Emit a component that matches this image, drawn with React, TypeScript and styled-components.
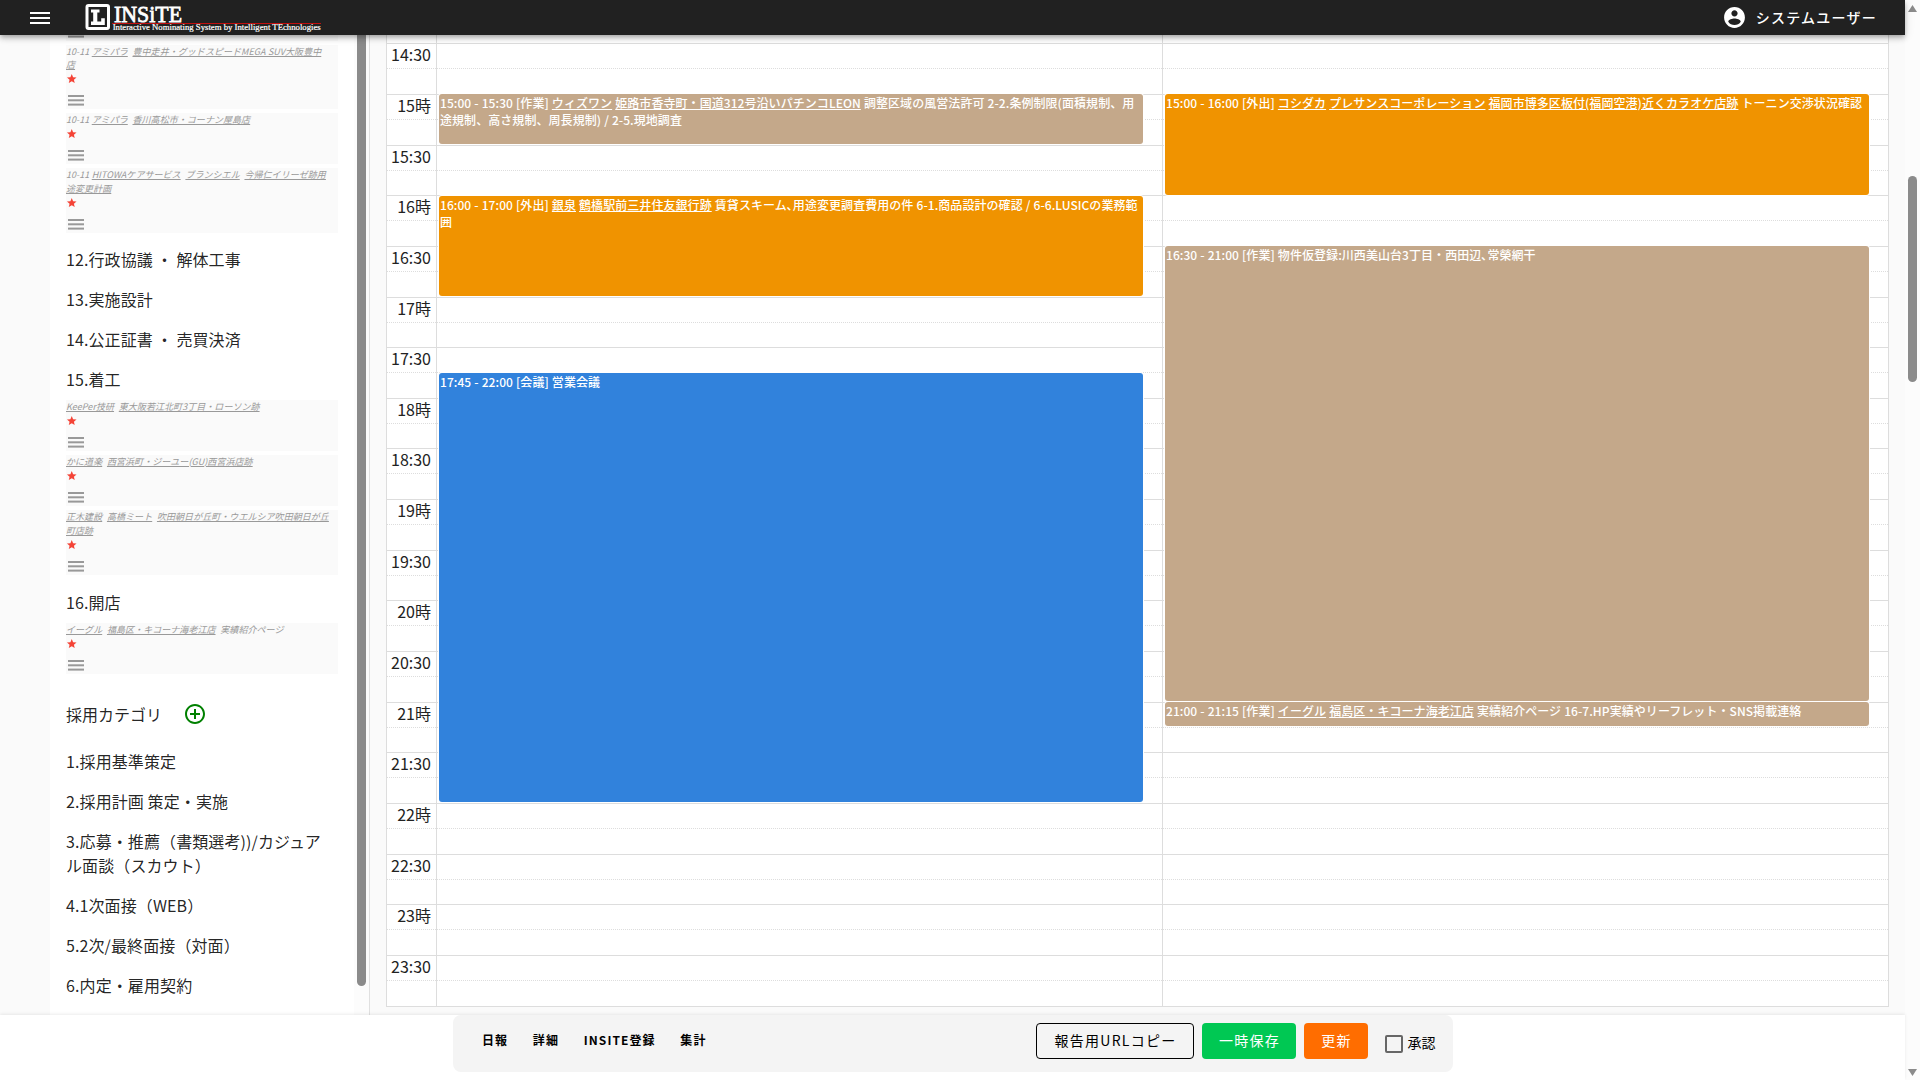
import type { ReactNode } from "react";
import styled, { createGlobalStyle } from "styled-components";

const GlobalStyle = createGlobalStyle`
  * {
    box-sizing: border-box;
  }
  body {
    margin: 0;
    background-color: #fafafa;
    color: rgba(0, 0, 0, 0.87);
    font-family: "Noto Sans CJK JP", "Noto Sans", sans-serif;
    font-size: 16px;
    line-height: 1.5;
    overflow: hidden;
  }
`;

const Page = styled.div`
  display: flex;
  width: 1920px;
  height: 1080px;
`;

const Main = styled.div`
  display: flex;
  flex-direction: column;
  width: 1905px;
  height: 100%;
`;

/* header */

const AppBar = styled.header`
  display: flex;
  align-items: center;
  flex: none;
  height: 35px;
  padding: 0 28px 0 27px;
  background-color: #212121;
  color: #fff;
  position: relative;
  z-index: 5;
  box-shadow: 0 2px 4px -1px rgba(0, 0, 0, 0.2),
    0 4px 5px 0 rgba(0, 0, 0, 0.14), 0 1px 10px 0 rgba(0, 0, 0, 0.12);
`;

const LogoLink = styled.div`
  display: flex;
  margin-left: 32px;
`;

const UserButton = styled.div`
  display: flex;
  align-items: center;
  gap: 9px;
  margin-left: auto;
  font-size: 14px;
  font-weight: 500;
  letter-spacing: 1.25px;
`;

/* body */

const Body = styled.div`
  display: flex;
  flex: none;
  height: 980px;
  overflow: hidden;
`;

const Sidebar = styled.aside`
  display: flex;
  width: 370px;
  padding-left: 50px;
  border-right: 1px solid #e0e0e0;
`;

const CategoryPane = styled.div`
  width: 304px;
  padding: 0 16px;
  background-color: #fff;
  overflow: hidden;
`;

const SideTrack = styled.div`
  width: 15px;
  padding: 0 3px;
  background-color: #fcfcfc;
`;

const SideThumb = styled.div`
  height: 951px;
  border-radius: 0 0 5px 5px;
  background-color: #8b8b8b;
`;

const TaskList = styled.div<{ $top?: number; $bottom: number }>`
  display: flex;
  flex-direction: column;
  gap: 4px;
  padding-top: ${(props) => props.$top ?? 1}px;
  margin-bottom: ${(props) => props.$bottom}px;
`;

const TaskCard = styled.div<{ $height?: number }>`
  display: flex;
  flex-direction: column;
  flex: none;
  width: 272px;
  height: ${(props) => (props.$height ? props.$height + "px" : "auto")};
  background-color: #fafafa;
  color: #999;
  font-size: 9px;
  line-height: 13.5px;
  justify-content: flex-end;
`;

const TaskText = styled.div`
  width: 263.8px;
  font-style: italic;
  white-space: pre-wrap;
  word-break: break-all;
  letter-spacing: 0.05px;
  word-spacing: 0.3px;
`;

const StarRow = styled.div`
  height: 13.5px;
  padding-top: 1.5px;
  svg {
    display: block;
  }
`;

const HandleRow = styled.div`
  flex: none;
  height: 24px;
  padding: 10px 0 0 2px;
  svg {
    display: block;
  }
`;

const CategoryTitle = styled.div`
  padding: 8px 8px 8px 0;
  letter-spacing: 0.1px;
`;

const GroupTitle = styled.div`
  display: flex;
  align-items: center;
  gap: 21px;
  height: 40px;
  margin-bottom: 7.5px;
`;

/* calendar */

const CalendarPane = styled.main`
  flex: 1;
  padding: 0 16px;
`;

const Calendar = styled.div`
  position: relative;
  height: 972px;
  border: 1px solid #ddd;
  border-top: 0;
  background-color: #fff;
  overflow: hidden;
`;

const SlotGrid = styled.div`
  padding-top: 8.3px;
`;

const Slot = styled.div<{ $minor?: boolean }>`
  display: flex;
  height: ${(props) => (props.$minor ? "25.65px" : "25px")};
  border-top: 1px ${(props) => (props.$minor ? "dotted" : "solid")} #ddd;
`;

const SlotLabel = styled.div`
  width: 49px;
  padding-right: 5px;
  text-align: right;
  line-height: 21px;
  color: #222;
`;

const DayLayer = styled.div`
  display: grid;
  grid-template-columns: 1fr 1fr;
  position: absolute;
  top: 0;
  left: 49px;
  right: 0;
  bottom: 0;
`;

const DayColumn = styled.div`
  position: relative;
  border-left: 1px solid #ddd;
`;

const EventBox = styled.div<{ $color: string }>`
  position: absolute;
  left: 2px;
  right: calc(2.5% + 0.4px);
  padding: 0 1px;
  border-radius: 3px;
  background-color: ${(props) => props.$color};
  box-shadow: 0 0 0 1px #fff;
  color: #fff;
  font-size: 12px;
  font-weight: 500;
  line-height: 17px;
  letter-spacing: 0.06px;
  word-spacing: 0.3px;
  overflow: hidden;
`;

/* footer */

const Footer = styled.footer`
  display: flex;
  justify-content: center;
  align-items: flex-start;
  flex: none;
  height: 65px;
  background-color: #fff;
  box-shadow: 0 -1px 3px rgba(0, 0, 0, 0.08);
  position: relative;
  z-index: 4;
`;

const ActionPanel = styled.div`
  display: flex;
  align-items: center;
  width: 1000px;
  height: 57px;
  padding: 0 17px;
  border-radius: 8px;
  background-color: #f4f4f4;
  color: #000;
`;

const TabItem = styled.div`
  padding: 0 12.4px;
  margin-top: -7px;
  font-size: 12px;
  font-weight: 700;
  letter-spacing: 1.07px;
`;

const Actions = styled.div`
  display: flex;
  gap: 8px;
  margin: -5px 0 0 auto;
`;

const ActionButton = styled.div<{ $bg?: string; $width: number }>`
  display: flex;
  justify-content: center;
  align-items: center;
  width: ${(props) => props.$width}px;
  height: 36px;
  padding: 0 0 2px 2px;
  border: ${(props) => (props.$bg ? "0" : "1px solid #000")};
  border-radius: 4px;
  background-color: ${(props) => props.$bg ?? "transparent"};
  color: ${(props) => (props.$bg ? "#fff" : "#000")};
  font-size: 14px;
  letter-spacing: 1.25px;
`;

const Approve = styled.label`
  display: flex;
  align-items: center;
  gap: 5px;
  margin: -2px 0 0 17px;
  font-size: 14px;
`;

const CheckSquare = styled.span`
  width: 18px;
  height: 18px;
  margin-top: 3px;
  border: 2px solid #666;
  border-radius: 2px;
`;

/* window scrollbar */

const WindowTrack = styled.div`
  display: flex;
  flex-direction: column;
  align-items: center;
  width: 15px;
  padding: 5px 0 4px;
  background-color: #fcfcfc;
`;

const WindowThumb = styled.div`
  width: 9px;
  height: 206px;
  margin: 164px 0 auto;
  border-radius: 5px;
  background-color: #8b8b8b;
`;

type Task = { text: ReactNode; height?: number };

const Handle = () => (
  <svg width="16" height="11" fill="#999">
    <rect y="0" width="16" height="2" />
    <rect y="4.3" width="16" height="2" />
    <rect y="8.6" width="16" height="2" />
  </svg>
);

const Star = () => (
  <svg width="11.5" height="11.5" viewBox="0 0 24 24" fill="#f44336">
    <path d="M12 17.27L18.18 21l-1.64-7.03L22 9.24l-7.19-.61L12 2 9.19 8.63 2 9.24l5.46 4.73L5.82 21z" />
  </svg>
);

type TasksProps = { items: Task[]; top?: number; bottom: number };

const Tasks = ({ items, top, bottom }: TasksProps) => (
  <TaskList $top={top} $bottom={bottom}>
    {items.map((item, i) => (
      <TaskCard key={i} $height={item.height}>
        {item.text && <TaskText>{item.text}</TaskText>}
        {item.text && (
          <StarRow>
            <Star />
          </StarRow>
        )}
        <HandleRow>
          <Handle />
        </HandleRow>
      </TaskCard>
    ))}
  </TaskList>
);

const contractTasks: Task[] = [
  // scrolled almost out of view
  { text: null, height: 5.7 },
  {
    text: (
      <>
        10-11 <u>アミパラ</u>{"  "}
        <u>豊中走井・グッドスピードMEGA SUV大阪豊中店</u>
      </>
    ),
  },
  {
    text: (
      <>
        10-11 <u>アミパラ</u>{"  "}
        <u>香川高松市・コーナン屋島店</u>
      </>
    ),
  },
  {
    text: (
      <>
        10-11 <u>HITOWAケアサービス</u>{"  "}
        <u>ブランシエル</u>{"  "}
        <u>今帰仁イリーゼ跡用途変更計画</u>
      </>
    ),
  },
];

const startTasks: Task[] = [
  {
    text: (
      <>
        <u>KeePer技研</u>{"  "}
        <u>東大阪若江北町3丁目・ローソン跡</u>
      </>
    ),
  },
  {
    text: (
      <>
        <u>かに道楽</u>{"  "}
        <u>西宮浜町・ジーユー(GU)西宮浜店跡</u>
      </>
    ),
  },
  {
    text: (
      <>
        <u>正木建設</u>{"  "}
        <u>高橋ミート</u>{"  "}
        <u>吹田朝日が丘町・ウエルシア吹田朝日が丘町店跡</u>
      </>
    ),
  },
];

const openTasks: Task[] = [
  {
    text: (
      <>
        <u>イーグル</u>{"  "}
        <u>福島区・キコーナ海老江店</u>{"  "}実績紹介ページ
      </>
    ),
  },
];

const recruitCategories = [
  "1.採用基準策定",
  "2.採用計画 策定・実施",
  "3.応募・推薦（書類選考))/カジュアル面談（スカウト）",
  "4.1次面接（WEB）",
  "5.2次/最終面接（対面）",
  "6.内定・雇用契約",
];

const slotLabels = [
  "14:30", "15時", "15:30", "16時", "16:30", "17時", "17:30",
  "18時", "18:30", "19時", "19:30", "20時", "20:30", "21時",
  "21:30", "22時", "22:30", "23時", "23:30",
];

type CalendarEvent = {
  start: number;
  end: number;
  color: string;
  text: ReactNode;
};

const TAN = "#c4a88a";
const ORANGE = "#f09300";
const BLUE = "#3182dc";

const days: CalendarEvent[][] = [
  [
    {
      start: 15,
      end: 15.5,
      color: TAN,
      text: (
        <>
          15:00 - 15:30 [作業] <u>ウィズワン</u>{" "}
          <u>姫路市香寺町・国道312号沿いパチンコLEON</u>{" "}
          調整区域の風営法許可 2-2.条例制限(面積規制、用途規制、高さ規制、周長規制) / 2-5.現地調査
        </>
      ),
    },
    {
      start: 16,
      end: 17,
      color: ORANGE,
      text: (
        <>
          16:00 - 17:00 [外出] <u>銀泉</u> <u>鶴橋駅前三井住友銀行跡</u>{" "}
          賃貸スキーム､用途変更調査費用の件 6-1.商品設計の確認 / 6-6.LUSICの業務範囲
        </>
      ),
    },
    {
      start: 17.75,
      end: 22,
      color: BLUE,
      text: <>17:45 - 22:00 [会議] 営業会議</>,
    },
  ],
  [
    {
      start: 15,
      end: 16,
      color: ORANGE,
      text: (
        <>
          15:00 - 16:00 [外出] <u>コシダカ</u>{" "}
          <u>プレサンスコーポレーション</u>{" "}
          <u>福岡市博多区板付(福岡空港)近くカラオケ店跡</u> トーニン交渉状況確認
        </>
      ),
    },
    {
      start: 16.5,
      end: 21,
      color: TAN,
      text: <>16:30 - 21:00 [作業] 物件仮登録:川西美山台3丁目・西田辺､常榮網干</>,
    },
    {
      start: 21,
      end: 21.25,
      color: TAN,
      text: (
        <>
          21:00 - 21:15 [作業] <u>イーグル</u>{" "}
          <u>福島区・キコーナ海老江店</u> 実績紹介ページ 16-7.HP実績やリーフレット・SNS掲載連絡
        </>
      ),
    },
  ],
];

const HOUR = 101.3;
const toTop = (hour: number) => 8.7 + (hour - 14.5) * HOUR;

const Logo = () => (
  <svg width="240" height="35" viewBox="0 0 240 35">
    <rect x="2" y="5.5" width="21.5" height="23" rx="1.5" fill="none" stroke="#fff" strokeWidth="3" />
    <path d="M6 9.5h8.5v3h-2.2v9h3.9v-3.2h3.6V25H6v-3.5h2.2v-9H6z" fill="#fff" />
    <rect x="27" y="23" width="209" height="1" fill="#c00f0f" />
    <text x="29" y="22" fill="#fff" stroke="#fff" strokeWidth="0.8" fontFamily="Liberation Serif, serif" fontSize="24" textLength="68" lengthAdjust="spacingAndGlyphs">
      INSiTE
    </text>
    <text x="27.7" y="30.4" fill="#fff" stroke="#fff" strokeWidth="0.2" fontFamily="Liberation Serif, serif" fontSize="8.3" textLength="208" lengthAdjust="spacingAndGlyphs">
      Interactive Nominating System by Intelligent TEchnologies
    </text>
  </svg>
);

const Header = () => (
  <AppBar>
    <svg width="26" height="26" viewBox="0 0 26 26" fill="#fff">
      <path d="M3 7h20v2H3zM3 12h20v2H3zM3 17h20v2H3z" />
    </svg>
    <LogoLink>
      <Logo />
    </LogoLink>
    <UserButton>
      <svg width="25" height="25" viewBox="0 0 24 24" fill="#fff">
        <path d="M12 2C6.48 2 2 6.48 2 12s4.48 10 10 10 10-4.48 10-10S17.52 2 12 2zm0 3c1.66 0 3 1.34 3 3s-1.34 3-3 3-3-1.34-3-3 1.34-3 3-3zm0 14.2c-2.5 0-4.71-1.28-6-3.22.03-1.99 4-3.08 6-3.08 1.99 0 5.97 1.09 6 3.08-1.29 1.94-3.5 3.22-6 3.22z" />
      </svg>
      システムユーザー
    </UserButton>
  </AppBar>
);

const App = () => {
  return (
    <>
      <GlobalStyle />
      <Page>
        <Main>
          <Header />
          <Body>
            <Sidebar>
              <CategoryPane>
                <Tasks items={contractTasks} top={0} bottom={6.5} />
                <CategoryTitle>12.行政協議 ・ 解体工事</CategoryTitle>
                <CategoryTitle>13.実施設計</CategoryTitle>
                <CategoryTitle>14.公正証書 ・ 売買決済</CategoryTitle>
                <CategoryTitle>15.着工</CategoryTitle>
                <Tasks items={startTasks} bottom={7} />
                <CategoryTitle>16.開店</CategoryTitle>
                <Tasks items={openTasks} bottom={20} />
                <GroupTitle>
                  採用カテゴリ
                  <svg width="24" height="24" viewBox="0 0 24 24" fill="green">
                    <path d="M13 7h-2v4H7v2h4v4h2v-4h4v-2h-4V7zm-1-5C6.48 2 2 6.48 2 12s4.48 10 10 10 10-4.48 10-10S17.52 2 12 2zm0 18c-4.41 0-8-3.59-8-8s3.59-8 8-8 8 3.59 8 8-3.59 8-8 8z" />
                  </svg>
                </GroupTitle>
                {recruitCategories.map((name) => (
                  <CategoryTitle key={name}>{name}</CategoryTitle>
                ))}
              </CategoryPane>
              <SideTrack>
                <SideThumb />
              </SideTrack>
            </Sidebar>
            <CalendarPane>
              <Calendar>
                <SlotGrid>
                  {slotLabels.map((label) => (
                    <div key={label}>
                      <Slot>
                        <SlotLabel>{label}</SlotLabel>
                      </Slot>
                      <Slot $minor />
                    </div>
                  ))}
                </SlotGrid>
                <DayLayer>
                  {days.map((events, i) => (
                    <DayColumn key={i}>
                      {events.map((event) => (
                        <EventBox
                          key={event.start}
                          $color={event.color}
                          style={{
                            top: toTop(event.start),
                            height: toTop(event.end) - toTop(event.start) - 1,
                          }}
                        >
                          {event.text}
                        </EventBox>
                      ))}
                    </DayColumn>
                  ))}
                </DayLayer>
              </Calendar>
            </CalendarPane>
          </Body>
          <Footer>
            <ActionPanel>
              <TabItem>日報</TabItem>
              <TabItem>詳細</TabItem>
              <TabItem>INSITE登録</TabItem>
              <TabItem>集計</TabItem>
              <Actions>
                <ActionButton $width={158}>報告用URLコピー</ActionButton>
                <ActionButton $width={94} $bg="#00c853">一時保存</ActionButton>
                <ActionButton $width={64} $bg="#ff6d00">更新</ActionButton>
              </Actions>
              <Approve>
                <CheckSquare />
                承認
              </Approve>
            </ActionPanel>
          </Footer>
        </Main>
        <WindowTrack>
          <svg width="9" height="7" fill="#8b8b8b">
            <path d="M4.5 0L9 7H0z" />
          </svg>
          <WindowThumb />
          <svg width="9" height="7" fill="#8b8b8b">
            <path d="M0 0h9L4.5 7z" />
          </svg>
        </WindowTrack>
      </Page>
    </>
  );
};

export default App;
